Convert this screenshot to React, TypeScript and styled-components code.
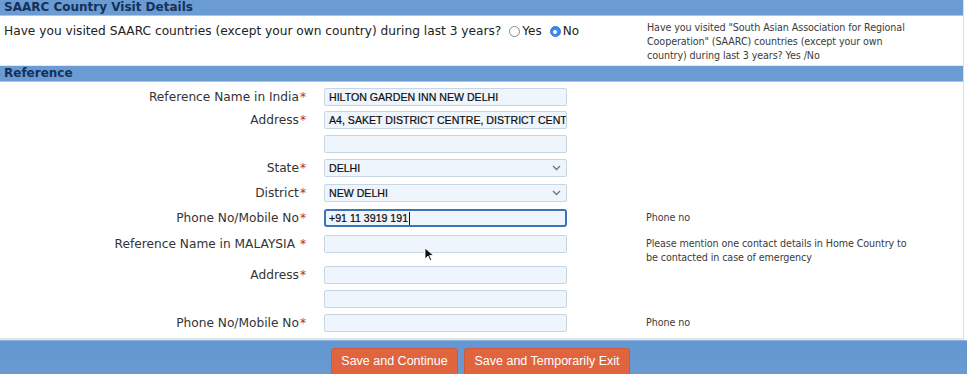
import React from "react";
import styled, { createGlobalStyle } from "styled-components";

const Global = createGlobalStyle`
  html, body { margin: 0; padding: 0; background: #ffffff; }
  body { font-family: "DejaVu Sans", Verdana, sans-serif; color: #333; }
  * { box-sizing: border-box; }
`;

const Page = styled.div`
  width: 967px;
  height: 374px;
  overflow: hidden;
  position: relative;
  display: flex;
  flex-direction: column;
`;

const Panel = styled.div`
  width: 964px;
  border-right: 1px solid #d6dee8;
  display: flex;
  flex-direction: column;
`;

const SectionBar = styled.div`
  height: 16px;
  background: #6a9bd2;
  border-bottom: 1px solid #a9c6e6;
  color: #15315a;
  font-weight: bold;
  font-size: 12px;
  line-height: 15px;
  padding-left: 4px;
`;

const QuestionRow = styled.div`
  height: 50px;
  display: grid;
  grid-template-columns: 647px 1fr;
  align-items: start;
  border-bottom: 1px solid #e2e8ef;
`;

const QuestionText = styled.div`
  padding: 8px 0 0 4px;
  font-size: 12.2px;
  line-height: 15px;
  color: #222;
  display: flex;
  align-items: center;
  white-space: nowrap;
`;

const RadioGroup = styled.span`
  display: inline-flex;
  align-items: center;
  margin-left: 8px;
  gap: 8px;
`;

const RadioLabel = styled.label`
  display: inline-flex;
  align-items: center;
  gap: 2px;
  font-size: 12px;
  color: #222;
`;

const RadioDot = styled.span<{ $checked?: boolean }>`
  width: 11px;
  height: 11px;
  border-radius: 50%;
  border: 1px solid ${(p) => (p.$checked ? "#2f7de1" : "#8a8a8a")};
  background: ${(p) => (p.$checked ? "#3a8af0" : "#fff")};
  display: inline-flex;
  align-items: center;
  justify-content: center;
  &::after {
    content: "";
    width: 4px;
    height: 4px;
    border-radius: 50%;
    background: ${(p) => (p.$checked ? "#fff" : "transparent")};
  }
`;

const HelpText = styled.div`
  font-size: 9.6px;
  line-height: 14px;
  color: #3b3b3b;
  letter-spacing: -0.1px;
  padding-right: 20px;
`;

const QuestionHelp = styled(HelpText)`
  padding-top: 5px;
`;

const Form = styled.div`
  display: flex;
  flex-direction: column;
  padding: 6px 0 4px;
  border-bottom: 2px solid #dfe6ee;
`;

const FormRow = styled.div<{ $h: number }>`
  display: grid;
  grid-template-columns: 306px 304px 1fr;
  column-gap: 18px;
  align-items: start;
  height: ${(p) => p.$h}px;
`;

const FieldLabel = styled.div`
  text-align: right;
  font-size: 12.2px;
  line-height: 18px;
  color: #333;
  white-space: nowrap;
`;

const Star = styled.span`
  color: #b0303a;
  margin-left: 1px;
`;

const FieldCell = styled.div`
  width: 243px;
  position: relative;
`;

const TextBox = styled.div<{ $focused?: boolean }>`
  height: 18px;
  width: 243px;
  background: #eef5fc;
  border: ${(p) => (p.$focused ? "2px solid #3c72b8" : "1px solid #c8d5e2")};
  border-radius: ${(p) => (p.$focused ? "3px" : "2px")};
  padding: 0 ${(p) => (p.$focused ? "3px" : "4px")};
  font-family: "Liberation Sans", Arial, sans-serif;
  font-size: 10.6px;
  line-height: ${(p) => (p.$focused ? "14px" : "16px")};
  color: #0c0c0c;
  white-space: nowrap;
  overflow: hidden;
  display: flex;
  align-items: center;
  -webkit-text-stroke: 0.2px #0c0c0c;
`;

const Caret = styled.span`
  display: inline-block;
  width: 1px;
  height: 13px;
  background: #111;
  margin-left: 1px;
`;

const Chevron = styled.svg`
  position: absolute;
  right: 6px;
  top: 6px;
`;

const RowHelp = styled(HelpText)`
  padding-top: 2px;
`;

const Cursor = styled.svg`
  position: absolute;
  left: 424px;
  top: 247px;
`;

const ActionBar = styled.div`
  flex: 1;
  background: linear-gradient(180deg, #6297d2 0%, #6a9bcf 100%);
  border-top: 1px solid #8fb2da;
  display: flex;
  justify-content: center;
  gap: 6px;
  padding: 7px 6px 0 0;
`;

const ActionButton = styled.button<{ $w: number }>`
  width: ${(p) => p.$w}px;
  height: 30px;
  background: #e0643e;
  border: 1px solid #cf5a35;
  border-radius: 3px;
  color: #fff;
  font-family: "Liberation Sans", Arial, sans-serif;
  font-size: 12.5px;
  padding: 0 0 4px;
  cursor: pointer;
`;

type Field = {
  label?: string;
  value?: string;
  select?: boolean;
  focused?: boolean;
  help?: React.ReactNode;
  spaceStar?: boolean;
  h: number;
};

const fields: Field[] = [
  { label: "Reference Name in India", value: "HILTON GARDEN INN NEW DELHI", h: 23 },
  { label: "Address", value: "A4, SAKET DISTRICT CENTRE, DISTRICT CENTRE", h: 24 },
  { value: "", h: 24 },
  { label: "State", value: "DELHI", select: true, h: 25 },
  { label: "District", value: "NEW DELHI", select: true, h: 25 },
  { label: "Phone No/Mobile No", value: "+91 11 3919 191", focused: true, help: "Phone no", h: 26 },
  {
    label: "Reference Name in MALAYSIA",
    spaceStar: true,
    value: "",
    h: 31,
    help: (
      <>
        Please mention one contact details in Home Country to
        <br />
        be contacted in case of emergency
      </>
    ),
  },
  { label: "Address", value: "", h: 24 },
  { value: "", h: 24 },
  { label: "Phone No/Mobile No", value: "", help: "Phone no", h: 20 },
];

export default function App() {
  return (
    <Page>
      <Global />
      <Panel>
        <SectionBar>SAARC Country Visit Details</SectionBar>
        <QuestionRow>
          <QuestionText>
            Have you visited SAARC countries (except your own country) during last 3 years?
            <RadioGroup>
              <RadioLabel>
                <RadioDot />
                Yes
              </RadioLabel>
              <RadioLabel>
                <RadioDot $checked />
                No
              </RadioLabel>
            </RadioGroup>
          </QuestionText>
          <QuestionHelp>
            Have you visited "South Asian Association for Regional
            <br />
            Cooperation" (SAARC) countries (except your own
            <br />
            country) during last 3 years? Yes /No
          </QuestionHelp>
        </QuestionRow>
        <SectionBar>Reference</SectionBar>
        <Form>
          {fields.map((f, i) => (
            <FormRow key={i} $h={f.h}>
              <FieldLabel>
                {f.label}
                {f.label && <Star>{f.spaceStar ? " *" : "*"}</Star>}
              </FieldLabel>
              <FieldCell>
                <TextBox $focused={f.focused}>
                  {f.value}
                  {f.focused && <Caret />}
                </TextBox>
                {f.select && (
                  <Chevron width="9" height="6" viewBox="0 0 9 6">
                    <path d="M1 1l3.5 3.5L8 1" fill="none" stroke="#6d7580" strokeWidth="1.3" />
                  </Chevron>
                )}
              </FieldCell>
              <RowHelp>{f.help}</RowHelp>
            </FormRow>
          ))}
        </Form>
      </Panel>
      <ActionBar>
        <ActionButton $w={127}>Save and Continue</ActionButton>
        <ActionButton $w={166}>Save and Temporarily Exit</ActionButton>
      </ActionBar>
      <Cursor width="10" height="15" viewBox="0 0 10 15">
        <path d="M1 1v11l3-3 2 4.5 1.6-.7-2-4.3H9.5z" fill="#111" stroke="#fff" strokeWidth="0.8" />
      </Cursor>
    </Page>
  );
}
